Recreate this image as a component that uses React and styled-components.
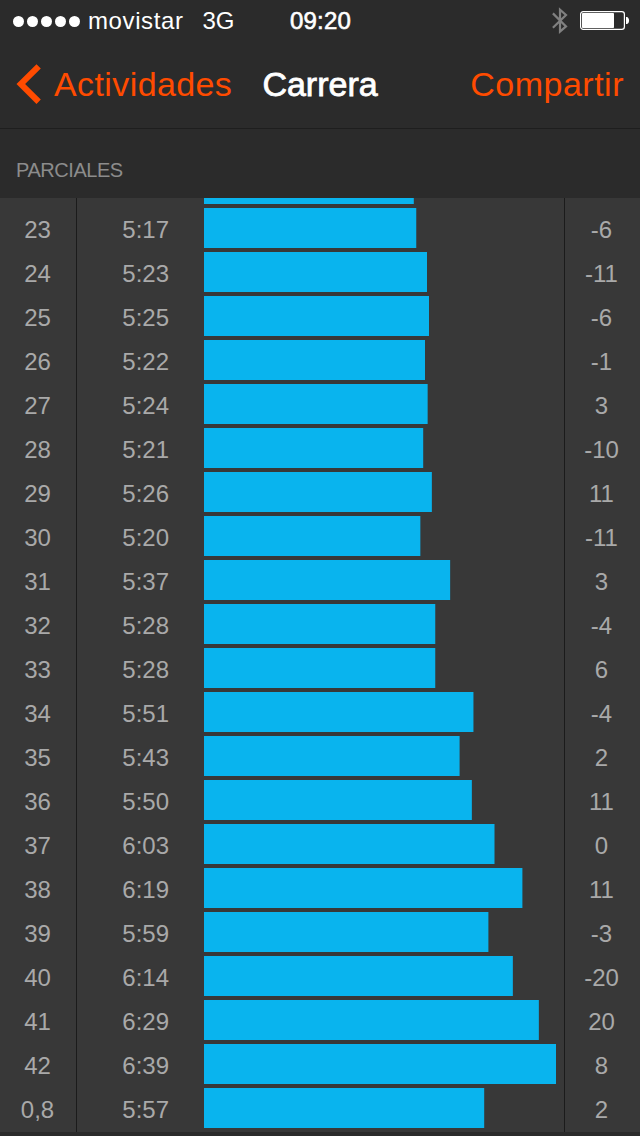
import React from "react";
import styled, { createGlobalStyle } from "styled-components";

const MAX_BAR = 352;

const splits = [
  { km: "23", pace: "5:17", bar: 212.25, diff: "-6" },
  { km: "24", pace: "5:23", bar: 223, diff: "-11" },
  { km: "25", pace: "5:25", bar: 225, diff: "-6" },
  { km: "26", pace: "5:22", bar: 221, diff: "-1" },
  { km: "27", pace: "5:24", bar: 223.65, diff: "3" },
  { km: "28", pace: "5:21", bar: 219.2, diff: "-10" },
  { km: "29", pace: "5:26", bar: 227.85, diff: "11" },
  { km: "30", pace: "5:20", bar: 216.35, diff: "-11" },
  { km: "31", pace: "5:37", bar: 246.15, diff: "3" },
  { km: "32", pace: "5:28", bar: 231.25, diff: "-4" },
  { km: "33", pace: "5:28", bar: 231.25, diff: "6" },
  { km: "34", pace: "5:51", bar: 269.45, diff: "-4" },
  { km: "35", pace: "5:43", bar: 255.6, diff: "2" },
  { km: "36", pace: "5:50", bar: 267.85, diff: "11" },
  { km: "37", pace: "6:03", bar: 290.5, diff: "0" },
  { km: "38", pace: "6:19", bar: 318.4, diff: "11" },
  { km: "39", pace: "5:59", bar: 284.4, diff: "-3" },
  { km: "40", pace: "6:14", bar: 308.85, diff: "-20" },
  { km: "41", pace: "6:29", bar: 334.85, diff: "20" },
  { km: "42", pace: "6:39", bar: 352, diff: "8" },
  { km: "0,8", pace: "5:57", bar: 280.2, diff: "2" },
];

const scale = (width) => ({ transform: `scaleX(${width / MAX_BAR})` });

export default function App() {
  return (
    <>
      <GlobalStyle />
      <Screen>
        <StatusBar>
          <Carrier>
            <Signal>
              {[0, 1, 2, 3, 4].map((dot) => (
                <i key={dot} />
              ))}
            </Signal>
            <Operator>movistar</Operator>
            <span>3G</span>
          </Carrier>
          <Clock>09:20</Clock>
          <Indicators>
            <svg width="16" height="28" viewBox="0 0 16 28" fill="none" stroke="#808080" strokeWidth="2.2">
              <path d="M0.9 6.4 L14 19.4 L8 24.6 V2.6 L14 8 L0.9 20.8" />
            </svg>
            <svg width="50" height="20" viewBox="0 0 50 20">
              <rect x="0.6" y="0.6" width="43.8" height="17.8" rx="2.6" fill="none" stroke="#fff" strokeWidth="1.2" />
              <rect x="2" y="2" width="32" height="15" rx="0.8" fill="#fff" />
              <path d="M46 6 H47 C49.8 7 49.8 12 47 13 H46 Z" fill="#fff" />
            </svg>
          </Indicators>
        </StatusBar>
        <NavBar>
          <Back>
            <svg width="26" height="42" viewBox="0 0 26 42" fill="#ff4b00">
              <path d="M0.5 21 L20.5 1.3 L24.8 5.5 L9.1 21 L24.8 36.5 L20.5 40.9 Z" />
            </svg>
            <span>Actividades</span>
          </Back>
          <Title>Carrera</Title>
          <Share>Compartir</Share>
        </NavBar>
        <SectionHeader>PARCIALES</SectionHeader>
        <List>
          <Remnant>
            <Bar $height={6} style={scale(209.8)} />
          </Remnant>
          {splits.map((split) => (
            <Row key={split.km}>
              <Km>{split.km}</Km>
              <Pace>{split.pace}</Pace>
              <Bar $height={40} style={scale(split.bar)} />
              <Diff>{split.diff}</Diff>
            </Row>
          ))}
        </List>
      </Screen>
    </>
  );
}

const GlobalStyle = createGlobalStyle`
  * {
    box-sizing: border-box;
  }
  body {
    margin: 0;
    background: #2b2b2b;
    font-family: "Liberation Sans", Arial, sans-serif;
  }
`;

const Screen = styled.div`
  width: 640px;
  height: 1136px;
  overflow: hidden;
  display: flex;
  flex-direction: column;
  background: #2b2b2b;
`;

const StatusBar = styled.div`
  height: 40px;
  display: grid;
  grid-template-columns: 1fr auto 1fr;
  align-items: center;
  padding: 2px 10px 0 13px;
  color: #fff;
  font-size: 24px;
  line-height: 38px;
`;

const Carrier = styled.div`
  display: flex;
  align-items: center;
`;

const Signal = styled.div`
  display: flex;
  gap: 3px;
  margin-right: 8px;
  i {
    width: 11px;
    height: 11px;
    border-radius: 50%;
    background: #fff;
  }
`;

const Operator = styled.span`
  letter-spacing: 0.6px;
  margin-right: 19px;
`;

const Clock = styled.div`
  margin-left: -2px;
  letter-spacing: 0.2px;
  -webkit-text-stroke: 0.6px #fff;
`;

const Indicators = styled.div`
  display: flex;
  align-items: center;
  justify-content: flex-end;
  gap: 12px;
`;

const NavBar = styled.div`
  height: 89px;
  display: grid;
  grid-template-columns: 1fr auto 1fr;
  align-items: center;
  padding: 0 16px;
  border-bottom: 1px solid #1e1e1e;
  font-size: 34px;
  line-height: 88px;
  color: #ff4b00;
`;

const Back = styled.div`
  display: flex;
  align-items: center;
  gap: 12px;
  letter-spacing: 0.4px;
`;

const Title = styled.div`
  color: #fff;
  -webkit-text-stroke: 0.8px #fff;
`;

const Share = styled.div`
  text-align: right;
  letter-spacing: 0.5px;
`;

const SectionHeader = styled.div`
  height: 69px;
  padding: 29px 16px 0;
  font-size: 20px;
  line-height: 24px;
  letter-spacing: -0.45px;
  color: #8c8c8c;
`;

const List = styled.div`
  height: 934px;
  background:
    linear-gradient(#1b1b1b, #1b1b1b) 76px 0 / 1px 100% no-repeat,
    linear-gradient(#1b1b1b, #1b1b1b) 564px 0 / 1px 100% no-repeat,
    #383838;
`;

/* foot of the row that is scrolled out under the header */
const Remnant = styled.div`
  height: 8px;
  padding-left: 204px;
`;

const Row = styled.div`
  height: 44px;
  display: grid;
  grid-template-columns: 76px 128px 360px 76px;
  align-items: center;
  font-size: 24px;
  line-height: 40px;
  color: #a9a9a9;
`;

const Km = styled.div`
  padding: 4px 1px 0 0;
  text-align: center;
`;

const Pace = styled.div`
  padding: 4px 35px 0 0;
  text-align: right;
`;

const Bar = styled.div`
  width: 352px;
  height: ${({ $height }) => $height}px;
  background: #09b4ee;
  transform-origin: left center;
`;

const Diff = styled.div`
  padding: 4px 1px 0 0;
  text-align: center;
`;
